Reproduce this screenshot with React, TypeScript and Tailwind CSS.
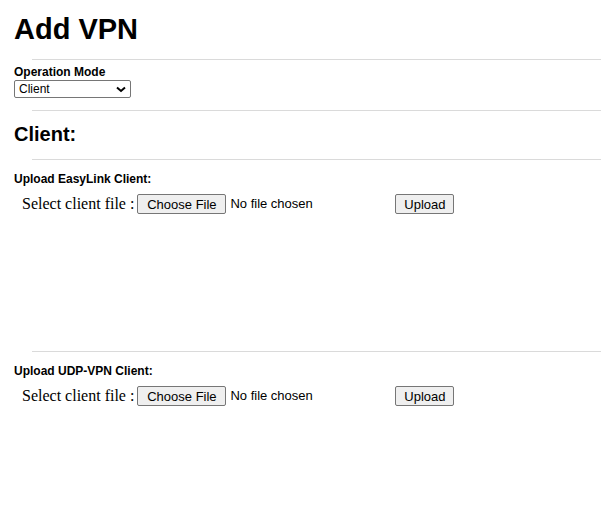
import React from "react";

function Rule() {
  return <div className="ml-[32px] h-px bg-[#dadada]" />;
}

function Btn({ w, children }: { w: string; children: React.ReactNode }) {
  return (
    <div
      className={`${w} h-[20px] flex items-center justify-center border border-[#767676] rounded-[2px] bg-[#efefef] text-[13px] text-black leading-none`}
    >
      {children}
    </div>
  );
}

function UploadSection({ title }: { title: string }) {
  return (
    <div className="h-[191px] pt-[12px]">
      <div className="pl-[14px] text-[12px] leading-[14px] font-bold">{title}</div>
      <div className="mt-[8px] pl-[22px] flex items-center h-[20px]">
        <span className="font-['Liberation_Serif',serif] text-[16px] leading-[20px] text-black">
          Select client file :
        </span>
        <div className="ml-[3px]">
          <Btn w="w-[89px]">Choose File</Btn>
        </div>
        <span className="ml-[4px] w-[165px] text-[13px] leading-[20px]">No file chosen</span>
        <Btn w="w-[59px]">Upload</Btn>
      </div>
    </div>
  );
}

export default function App() {
  return (
    <div className="w-[601px] h-[524px] bg-white text-black font-['Liberation_Sans',Arial,sans-serif] overflow-hidden">
      <div className="pt-[13px] pl-[14px] text-[29px] leading-[33px] font-bold">Add VPN</div>
      <div className="mt-[13px]">
        <Rule />
      </div>
      <div className="mt-[5px] pl-[14px] text-[12px] leading-[14px] font-bold">Operation Mode</div>
      <div className="ml-[14px] mt-[1px] w-[117px] h-[18px] border border-[#767676] rounded-[2px] flex items-center justify-between pl-[4px] pr-[4px]">
        <span className="text-[12px] leading-none">Client</span>
        <svg width="10" height="7" viewBox="0 0 10 7">
          <polyline points="1,1.5 5,5 9,1.5" fill="none" stroke="#000" strokeWidth="2" />
        </svg>
      </div>
      <div className="mt-[12px]">
        <Rule />
      </div>
      <div className="mt-[12px] pl-[14px] text-[20px] leading-[23px] font-bold">Client:</div>
      <div className="mt-[13px]">
        <Rule />
      </div>
      <UploadSection title="Upload EasyLink Client:" />
      <Rule />
      <UploadSection title="Upload UDP-VPN Client:" />
    </div>
  );
}
